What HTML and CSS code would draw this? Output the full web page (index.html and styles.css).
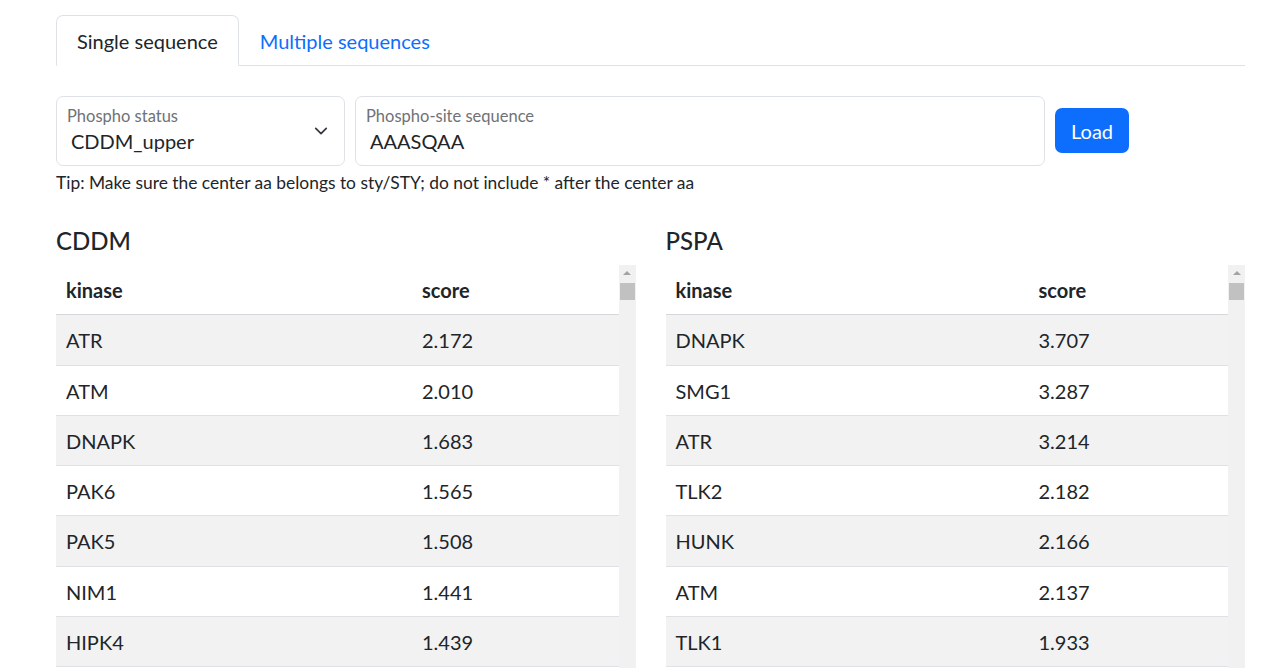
FILE: index.html
```html
<!DOCTYPE html>
<html lang="en">
<head>
    <meta charset="UTF-8">
    <meta name="viewport" content="width=device-width, initial-scale=1.0">
    <title>Kinase prediction</title>
    <link rel="stylesheet" href="styles.css">
</head>
<body>
    <div class="page">
        <ul class="tabs">
            <li class="tab active">Single sequence</li>
            <li class="tab">Multiple sequences</li>
        </ul>

        <div class="form-row">
            <div class="field field-select">
                <label>Phospho status</label>
                <div class="value">CDDM_upper</div>
                <svg class="chevron" width="14" height="14" viewBox="0 0 16 16">
                    <path d="M2 5l6 6 6-6" fill="none" stroke="#343a40" stroke-width="2" stroke-linecap="round" stroke-linejoin="round"/>
                </svg>
            </div>
            <div class="field field-input">
                <label>Phospho-site sequence</label>
                <div class="value">AAASQAA</div>
            </div>
            <button class="load-btn">Load</button>
        </div>
        <p class="tip">Tip: Make sure the center aa belongs to sty/STY; do not include * after the center aa</p>

        <div class="results">
            <div class="result-col">
                <h5>CDDM</h5>
                <div class="table-wrap">
                    <table class="score-table cddm">
                        <thead>
                            <tr><th>kinase</th><th>score</th></tr>
                        </thead>
                        <tbody>
                            <tr><td>ATR</td><td>2.172</td></tr>
                            <tr><td>ATM</td><td>2.010</td></tr>
                            <tr><td>DNAPK</td><td>1.683</td></tr>
                            <tr><td>PAK6</td><td>1.565</td></tr>
                            <tr><td>PAK5</td><td>1.508</td></tr>
                            <tr><td>NIM1</td><td>1.441</td></tr>
                            <tr><td>HIPK4</td><td>1.439</td></tr>
                        </tbody>
                    </table>
                    <div class="scrollbar">
                        <div class="arrow"></div>
                        <div class="thumb"></div>
                    </div>
                </div>
            </div>
            <div class="result-col">
                <h5>PSPA</h5>
                <div class="table-wrap">
                    <table class="score-table pspa">
                        <thead>
                            <tr><th>kinase</th><th>score</th></tr>
                        </thead>
                        <tbody>
                            <tr><td>DNAPK</td><td>3.707</td></tr>
                            <tr><td>SMG1</td><td>3.287</td></tr>
                            <tr><td>ATR</td><td>3.214</td></tr>
                            <tr><td>TLK2</td><td>2.182</td></tr>
                            <tr><td>HUNK</td><td>2.166</td></tr>
                            <tr><td>ATM</td><td>2.137</td></tr>
                            <tr><td>TLK1</td><td>1.933</td></tr>
                        </tbody>
                    </table>
                    <div class="scrollbar">
                        <div class="arrow"></div>
                        <div class="thumb"></div>
                    </div>
                </div>
            </div>
        </div>
    </div>
</body>
</html>
```

FILE: styles.css
```css
* {
    margin: 0;
    padding: 0;
    box-sizing: border-box;
}

body {
    font-family: "Lato", "Open Sans", sans-serif;
    font-size: 20px;
    line-height: 1.5;
    color: #212529;
    background: white;
    overflow: hidden;
}

.page {
    padding: 15px 35px 0 56px;
}

.tabs {
    list-style: none;
    display: flex;
    border-bottom: 1px solid #dee2e6;
}

.tab {
    padding: 10px 20px 9px;
    border: 1px solid transparent;
    border-radius: 7px 7px 0 0;
    margin-bottom: -1px;
    color: #0d6efd;
}

.tab.active {
    color: #212529;
    background: white;
    border-color: #dee2e6 #dee2e6 white;
}

.form-row {
    display: flex;
    gap: 10px;
    margin-top: 30px;
    align-items: flex-start;
}

.field {
    position: relative;
    height: 70px;
    border: 1px solid #dee2e6;
    border-radius: 7px;
    padding: 9px 10px 0 10px;
}

.field-select {
    width: 289px;
}

.field-input {
    width: 690px;
}

.field label {
    display: block;
    font-size: 16.5px;
    line-height: 20px;
    color: #6f7276;
}

.field .value {
    padding-left: 4px;
    line-height: 30px;
}

.chevron {
    position: absolute;
    right: 16px;
    top: 27px;
}

.load-btn {
    margin-top: 12px;
    height: 45px;
    padding: 0 16px;
    border: none;
    border-radius: 7px;
    background: #0d6efd;
    color: white;
    font-family: inherit;
    font-size: 20px;
}

.tip {
    font-size: 17.4px;
    line-height: 24px;
    margin-top: 5px;
}

.results {
    display: flex;
    gap: 30px;
    margin-top: 31px;
}

.result-col {
    flex: 1;
}

.result-col h5 {
    font-size: 24px;
    font-weight: 500;
    line-height: 30px;
    margin-bottom: 9px;
}

.table-wrap {
    display: flex;
    height: 403px;
    overflow: hidden;
}

.score-table {
    flex: 1;
    border-collapse: collapse;
    align-self: flex-start;
}

.score-table th,
.score-table td {
    padding: 10px 10px 9.3px;
    text-align: left;
    border-bottom: 1px solid #dee2e6;
}

.score-table th {
    font-weight: bold;
    border-bottom-color: #d6d8db;
}

.score-table tbody tr:nth-child(odd) td {
    background: #f2f2f2;
}

.cddm th:first-child {
    width: 356px;
}

.pspa th:first-child {
    width: 363px;
}

.scrollbar {
    width: 17px;
    background: #f1f1f1;
    flex-shrink: 0;
}

.arrow {
    width: 0;
    height: 0;
    margin: 6px auto 0;
    border-left: 4px solid transparent;
    border-right: 4px solid transparent;
    border-bottom: 4px solid #a3a3a3;
}

.thumb {
    margin: 8px 1px 0;
    height: 17px;
    background: #c1c1c1;
}
```
